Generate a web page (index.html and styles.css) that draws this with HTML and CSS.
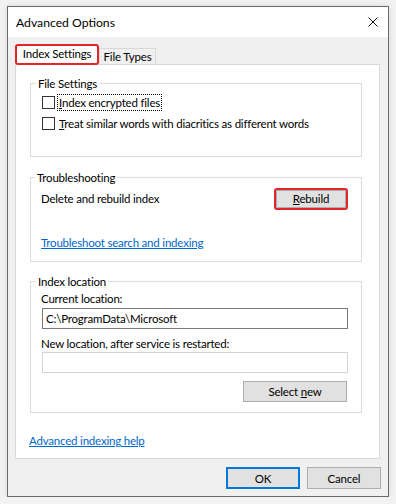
FILE: index.html
```html
<!DOCTYPE html>
<html>
<head>
<meta charset="utf-8">
<link rel="stylesheet" href="styles.css">
</head>
<body>
<div class="window">
  <div class="titlebar">
    <span class="title">Advanced Options</span>
    <svg class="close" width="10" height="10" viewBox="0 0 10 10"><path d="M0.5 0.5 L9.5 9.5 M9.5 0.5 L0.5 9.5" stroke="#111" stroke-width="1" fill="none"/></svg>
  </div>
  <div class="content">
    <div class="tabs">
      <div class="tab active">Index Settings</div>
      <div class="tab">File Types</div>
    </div>
    <div class="panel">
      <div class="group g1">
        <div class="gtitle">File Settings</div>
        <div class="check-row first">
          <span class="box"></span><span class="clabel focus"><u>I</u>ndex encrypted files</span>
        </div>
        <div class="check-row">
          <span class="box"></span><span class="clabel"><u>T</u>reat similar words with diacritics as different words</span>
        </div>
      </div>
      <div class="group g2">
        <div class="gtitle">Troubleshooting</div>
        <div class="rebuild-row">
          <span>Delete and rebuild index</span>
          <span class="hl"><span class="btn rebuild"><span><u>R</u>ebuild</span></span></span>
        </div>
        <a class="link ts">Troubleshoot search and indexing</a>
      </div>
      <div class="group g3">
        <div class="gtitle">Index location</div>
        <div class="flabel first">Current location:</div>
        <div class="textbox">C:\ProgramData\Microsoft</div>
        <div class="flabel">New location, after service is restarted:</div>
        <div class="textbox disabled"></div>
        <div class="select-row"><span class="btn select"><span>Select <u>n</u>ew</span></span></div>
      </div>
      <a class="link help">Advanced indexing help</a>
    </div>
    <div class="buttons">
      <span class="btn ok">OK</span>
      <span class="btn cancel">Cancel</span>
    </div>
  </div>
</div>
</body>
</html>
```

FILE: styles.css
```css
* { box-sizing: border-box; }
html, body { margin: 0; padding: 0; }
body {
  background: #f2f2f2;
  font-family: Lato, "Noto Sans", sans-serif;
  font-size: 11.5px;
  letter-spacing: -0.2px;
  line-height: 15px;
  color: #000;
  padding: 6px 0 0 7px;
  white-space: nowrap;
}
.window {
  width: 382px;
  height: 491px;
  border: 1px solid #6a6a6a;
  background: #f0f0f0;
  box-shadow: 0 0 6px rgba(0,0,0,0.12);
  display: flex;
  flex-direction: column;
}
.titlebar {
  height: 30px;
  background: #fff;
  display: flex;
  align-items: center;
  justify-content: space-between;
  padding: 0 10px 0 8px;
  flex: none;
}
.title { font-size: 12.2px; letter-spacing: 0; }
.close { display: block; }
.content {
  padding: 7px 8px 0 7px;
  flex: 1;
  display: flex;
  flex-direction: column;
}
.tabs {
  display: flex;
  align-items: flex-end;
  height: 20px;
}
.tab {
  height: 16px;
  line-height: 15px;
  border: 1px solid #d9d9d9;
  border-bottom: none;
  background: #f0f0f0;
  width: 57px;
  text-align: center;
}
.tab.active {
  height: 21px;
  width: 84px;
  border: 2px solid #e0262b;
  border-radius: 3px;
  background: #fff;
  line-height: 16px;
  position: relative;
  z-index: 1;
  margin-bottom: -1px;
}
.panel {
  height: 395px;
  background: #fff;
  border: 1px solid #d9d9d9;
  padding: 18px 17px 0 14px;
}
.group {
  border: 1px solid #dcdcdc;
  padding: 0 13px 0 11px;
}
.gtitle {
  margin-top: -8px;
  margin-left: -6px;
  display: table;
  background: #fff;
  padding: 0 2px;
  line-height: 15px;
}
.g1 { height: 74px; }
.check-row {
  display: flex;
  align-items: center;
  height: 21px;
}
.check-row.first { margin-top: 1px; }
.box {
  width: 13px;
  height: 13px;
  border: 1px solid #333;
  background: #fff;
  flex: none;
}
.clabel {
  margin-left: 2px;
  padding: 0 1px;
  border: 1px solid transparent;
}
.clabel.focus { border: 1px dotted #000; }
.g2 {
  margin-top: 20px;
  height: 85px;
  padding-left: 10px;
}
.rebuild-row {
  margin-top: 3px;
  height: 21px;
  display: flex;
  align-items: center;
  justify-content: space-between;
}
.hl {
  display: block;
  border: 2px solid #e0262b;
  border-radius: 3px;
  width: 74px;
  height: 22px;
}
.btn {
  display: flex;
  align-items: center;
  justify-content: center;
  background: #e1e1e1;
  border: 1px solid #adadad;
}
.rebuild { height: 18px; width: 70px; }
.link {
  display: table;
  color: #0066cc;
  text-decoration: underline;
}
.ts { margin-top: 26px; }
.g3 {
  margin-top: 19px;
  height: 132px;
}
.flabel { margin-top: 7px; margin-left: -1px; }
.flabel.first { margin-top: 2px; }
.textbox {
  margin-top: 2px;
  height: 21px;
  border: 1px solid #7a7a7a;
  padding: 0 3px;
  line-height: 19px;
  background: #fff;
}
.textbox.disabled { border-color: #d4d4d4; margin-top: 1px; }
.select-row {
  display: flex;
  justify-content: flex-end;
  margin-top: 8px;
  padding-right: 1px;
}
.select { width: 104px; height: 21px; }
.help { margin-left: -1px; margin-top: 20px; }
.buttons {
  display: flex;
  justify-content: flex-end;
  gap: 7px;
  margin-top: 8px;
  margin-right: -1px;
}
.ok, .cancel { width: 74px; height: 22px; }
.ok { border: 2px solid #0078d7; }
```
